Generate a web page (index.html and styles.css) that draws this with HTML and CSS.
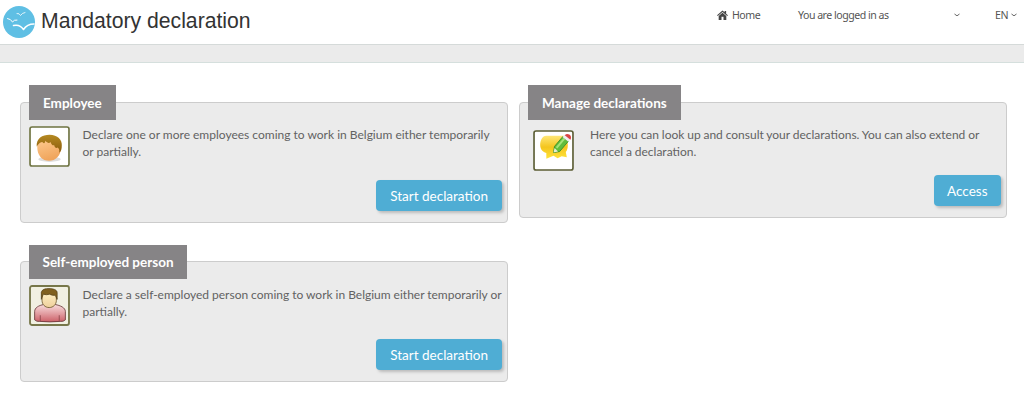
FILE: index.html
```html
<!DOCTYPE html>
<html lang="en">
<head>
    <meta charset="UTF-8">
    <meta name="viewport" content="width=device-width, initial-scale=1.0">
    <title>Mandatory declaration</title>
    <link rel="stylesheet" href="styles.css">
</head>
<body>

<header>
    <svg class="logo" viewBox="0 0 34 34">
        <circle cx="17" cy="17" r="16" fill="#5fbfe4"/>
        <g fill="none" stroke="#fff" stroke-linecap="round" stroke-linejoin="round">
            <path d="M15 8.500Q17.500 8 18.500 10.500Q20 8 23 7.500" stroke-width=".8"/>
            <path d="M5.500 13.500Q9 14 10.500 17Q12 14.500 15 15" stroke-width="1"/>
            <path d="M11.500 20.500Q18 19 21.500 24.500Q25 19 32 19" stroke-width="1.500"/>
        </g>
    </svg>
    <h1>Mandatory declaration</h1>
    <nav>
        <a class="home"><svg class="home-icon" viewBox="0 0 12 11"><path d="M6 .5 0 5.800l.8.900L6 2.200l5.200 4.500.8-.9-2-1.800V1H8.300v1.500zM6 3 1.800 6.600V11h3.100V7.500h2.200V11h3.100V6.600z" fill="#444"/></svg>Home</a>
        <a class="user">You are logged in as<svg class="caret" viewBox="0 0 6 4"><path d="M.5 1 3 2.800 5.500 1" fill="none" stroke="#666"/></svg></a>
        <a class="lang">EN<svg class="caret" viewBox="0 0 6 4"><path d="M.5 1 3 2.800 5.500 1" fill="none" stroke="#666"/></svg></a>
    </nav>
</header>
<div class="bar"></div>

<main>
    <div class="column">
        <section class="card">
            <h2>Employee</h2>
            <div class="content">
                <svg class="icon" viewBox="0 0 40 40">
                    <defs>
                        <linearGradient id="face" x2=".3" y2="1"><stop offset="0" stop-color="#ffce94"/><stop offset="1" stop-color="#f0a55c"/></linearGradient>
                        <linearGradient id="hair" x2="0" y2="1"><stop offset="0" stop-color="#b58a22"/><stop offset="1" stop-color="#8a5a0c"/></linearGradient>
                    </defs>
                    <rect x="1" y="1" width="38" height="38" rx="2" fill="#fff" stroke="#6f7442" stroke-width="1.600"/>
                    <ellipse cx="20" cy="32.500" rx="11" ry="2.500" fill="#ddd"/>
                    <path d="M8 20C8 29 13 34 19.500 34S31 29 31 22 27 11 20 11 8 13 8 20z" fill="url(#face)"/>
                    <path d="M7.500 20C7 12 13 8.500 20 8.500c8 0 12.500 5 12 10.500 0 3-.5 6-2.500 7 .5-3-.5-4-1.500-5-1.500 1-3 0-3.500-2.500-1 1-2.500 0-3.500-3-1 1.500-3 1.500-5-1-.5 3-1.500 3-3 1-1.500 0-3.500 1-5.500 4.500z" fill="url(#hair)"/>
                </svg>
                <p>Declare one or more employees coming to work in Belgium either temporarily<br>or partially.</p>
            </div>
            <button>Start declaration</button>
        </section>
        <section class="card">
            <h2>Self-employed person</h2>
            <div class="content">
                <svg class="icon" viewBox="0 0 40 40">
                    <defs>
                        <linearGradient id="shirt" x2="0" y2="1"><stop offset="0" stop-color="#f8dcdc"/><stop offset=".5" stop-color="#e3a0a4"/><stop offset="1" stop-color="#cc6068"/></linearGradient>
                        <linearGradient id="skin" x2="0" y2="1"><stop offset="0" stop-color="#fff0c4"/><stop offset="1" stop-color="#eed09c"/></linearGradient>
                    </defs>
                    <rect x="1" y="1" width="38" height="38" rx="2" fill="#f1f0e2" stroke="#77774a" stroke-width="1.800"/>
                    <path d="M5.500 34V26c0-4 4-6 9-7h11c5 1 10 3 10 7v8q-2 2-5 1.500-10 1-20 0-3 .5-5-1.500z" fill="url(#shirt)" stroke="#643336" stroke-width=".8"/>
                    <path d="M11 29.500v5.500M29.500 29.500v5.500" fill="none" stroke="#8b4549" stroke-width=".8"/>
                    <path d="M14.500 19q5.500 6 11 0l-1-2h-9z" fill="#fbeccb"/>
                    <path d="M12.700 7h14v8c0 4-3 7-7 7s-7-3-7-7z" fill="url(#skin)" stroke="#69552c" stroke-width=".8"/>
                    <path d="M12 14V7c1-3 4-3.500 7.500-3.500 4 0 8 1 8 4V14l-2-4q-3 .5-5.500-1-3 1-6 0z" fill="#80601f" stroke="#463412" stroke-width=".6"/>
                </svg>
                <p>Declare a self-employed person coming to work in Belgium either temporarily or<br>partially.</p>
            </div>
            <button>Start declaration</button>
        </section>
    </div>
    <div class="column">
        <section class="card manage">
            <h2>Manage declarations</h2>
            <div class="content">
                <svg class="icon" viewBox="0 0 40 40">
                    <defs>
                        <linearGradient id="bubble" x2="0" y2="1"><stop offset="0" stop-color="#ffe777"/><stop offset=".5" stop-color="#f4c51d"/><stop offset="1" stop-color="#ffe33a"/></linearGradient>
                    </defs>
                    <rect x="1" y="1" width="38" height="38" rx="2" fill="#fff" stroke="#5c5e35" stroke-width="1.600"/>
                    <path d="M13 5.500h17q4 1 4 9 0 5-2 7l1 5-5-1-4 2-4-2.500-7 3V22.500c-4-1-6-4-6-8s2-9 6-9z" fill="url(#bubble)"/>
                    <path d="M20 22 21 16 29 6.500l5.500 4.500L26 21z" fill="#5fbd3c" stroke="#2d8625" stroke-width=".8"/>
                    <path d="m23 17.500 7.500-9" stroke="#a4e278" stroke-width="2"/>
                    <path d="m29 7 2-2.500 5.500 4.500-2 2.500z" fill="#eee"/>
                    <path d="M31 5q2-2 4.500-.5 2.500 2 1 5z" fill="#d94545"/>
                    <path d="m20 22 1-4.500 3.500 3.500z" fill="#e4eed2"/>
                </svg>
                <p>Here you can look up and consult your declarations. You can also extend or<br>cancel a declaration.</p>
            </div>
            <button>Access</button>
        </section>
    </div>
</main>

</body>
</html>
```
FILE: styles.css
```css
body {
    font-family: Lato, sans-serif;
    margin: 0;
    background-color: #fff;
    color: #626262;
}

header {
    display: flex;
    height: 44px;
}

.logo {
    width: 34px;
    height: 34px;
    margin: 5px 0 0 2px;
}

h1 {
    font: 21.2px/42px "Liberation Sans", Arial, sans-serif;
    color: #333;
    margin: 0 0 0 5px;
}

nav {
    display: flex;
    align-items: flex-start;
    margin-left: auto;
    padding: 8px 7px 0 0;
    font-family: "Noto Sans", sans-serif;
    font-size: 10.6px;
    line-height: 14px;
    letter-spacing: -0.5px;
    color: #555;
}

nav a {
    display: flex;
    align-items: center;
}

.home {
    width: 81px;
}

.home-icon {
    width: 11px;
    height: 10px;
    margin-right: 4px;
}

.user {
    width: 162px;
    justify-content: space-between;
    margin-right: 35px;
}

.caret {
    width: 6px;
    height: 4px;
}

.lang {
    width: 22px;
    justify-content: space-between;
}

.bar {
    height: 17px;
    background-color: #ebebeb;
    border-top: 1px solid #d5dad9;
    border-bottom: 1px solid #d5dfdd;
}

main {
    display: flex;
    gap: 11px;
    padding: 39px 17px 0 20px;
}

.column {
    width: 488px;
}

.card {
    box-sizing: border-box;
    height: 121px;
    margin-bottom: 38px;
    border: 1px solid #ccc;
    border-radius: 4px;
    background-color: #ebebeb;
    display: flex;
    flex-direction: column;
    align-items: flex-start;
}

h2 {
    margin: -18px 0 0 8px;
    padding: 1px 14px 0;
    background-color: #868486;
    color: #fff;
    font-size: 13.5px;
    line-height: 34px;
    font-weight: bold;
}

.card + .card h2 {
    margin-top: -17px;
    padding: 0 13.5px;
}

.content {
    display: flex;
    margin: 6px 0 0 8px;
}

.icon {
    flex: none;
    width: 41px;
    height: 41px;
}

p {
    margin: 0 0 0 12.5px;
    font-size: 12px;
    line-height: 17px;
    white-space: nowrap;
}

.card + .card p {
    margin-top: 1px;
    word-spacing: -0.1px;
}

button {
    margin: auto 5px 11px auto;
    height: 31px;
    padding: 0 14px;
    border: 0;
    border-radius: 4px;
    background-color: #4fadd4;
    box-shadow: 2px 2px 3px #bbb;
    color: #fff;
    font: 13.5px Lato, sans-serif;
}

.manage {
    height: 116px;
}

.manage .content {
    margin: 10px 0 0 12.5px;
}

.manage p {
    margin: -4px 0 0 16.5px;
    word-spacing: -0.25px;
}

.manage button {
    padding: 0 13.5px;
}
```
